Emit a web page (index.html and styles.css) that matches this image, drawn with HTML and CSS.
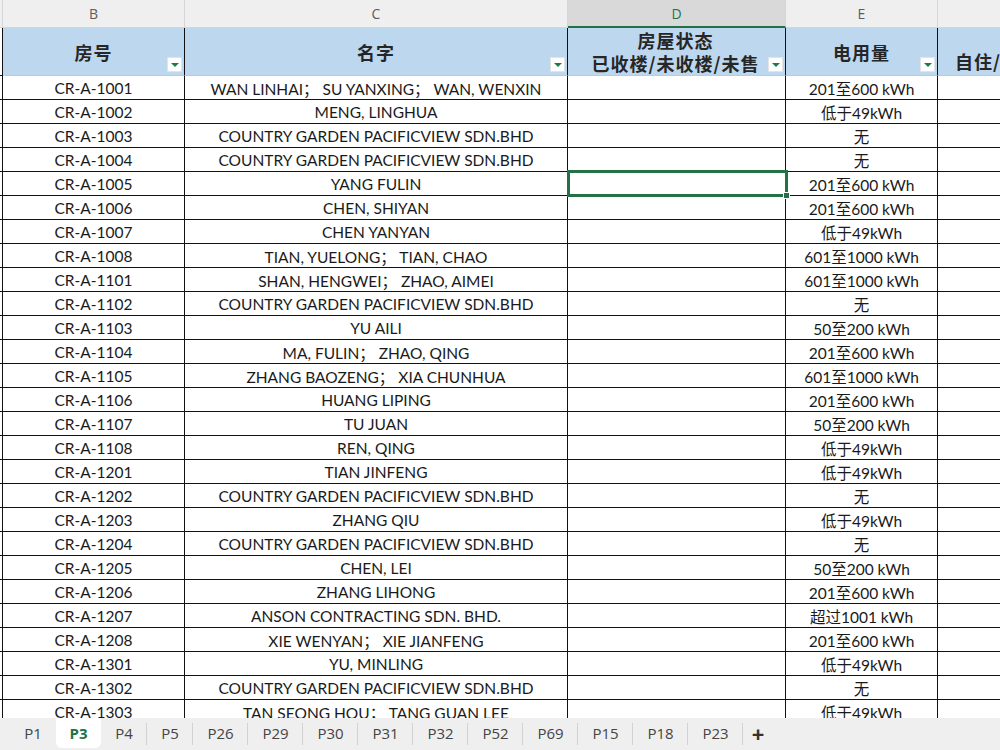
FILE: index.html
```html
<!DOCTYPE html>
<html lang="zh">
<head>
<meta charset="utf-8">
<title>P3</title>
<link rel="stylesheet" href="styles.css">
</head>
<body>
<div class="app">
  <div class="sheet">
    <div class="colhead">
      <div class="ch ch-a"></div>
      <div class="ch">B</div>
      <div class="ch">C</div>
      <div class="ch ch-sel">D</div>
      <div class="ch">E</div>
      <div class="ch"></div>
    </div>
    <div class="hdr">
      <div class="hc hc-a"></div>
      <div class="hc">房号<span class="filter"></span></div>
      <div class="hc">名字<span class="filter"></span></div>
      <div class="hc hc-two"><span class="ln">房屋状态</span><span class="ln">已收楼/未收楼/未售</span><span class="filter"></span></div>
      <div class="hc">电用量<span class="filter"></span></div>
      <div class="hc hc-f">自住/出租/空置</div>
    </div>
    <div class="row"><div class="c a"></div><div class="c">CR-A-1001</div><div class="c">WAN LINHAI； SU YANXING； WAN, WENXIN</div><div class="c"></div><div class="c">201至600 kWh</div><div class="c"></div></div>
    <div class="row"><div class="c a"></div><div class="c">CR-A-1002</div><div class="c">MENG, LINGHUA</div><div class="c"></div><div class="c">低于49kWh</div><div class="c"></div></div>
    <div class="row"><div class="c a"></div><div class="c">CR-A-1003</div><div class="c">COUNTRY GARDEN PACIFICVIEW SDN.BHD</div><div class="c"></div><div class="c">无</div><div class="c"></div></div>
    <div class="row"><div class="c a"></div><div class="c">CR-A-1004</div><div class="c">COUNTRY GARDEN PACIFICVIEW SDN.BHD</div><div class="c"></div><div class="c">无</div><div class="c"></div></div>
    <div class="row"><div class="c a"></div><div class="c">CR-A-1005</div><div class="c">YANG FULIN</div><div class="c c-sel"><span class="sel"><span class="handle"></span></span></div><div class="c">201至600 kWh</div><div class="c"></div></div>
    <div class="row"><div class="c a"></div><div class="c">CR-A-1006</div><div class="c">CHEN, SHIYAN</div><div class="c"></div><div class="c">201至600 kWh</div><div class="c"></div></div>
    <div class="row"><div class="c a"></div><div class="c">CR-A-1007</div><div class="c">CHEN YANYAN</div><div class="c"></div><div class="c">低于49kWh</div><div class="c"></div></div>
    <div class="row"><div class="c a"></div><div class="c">CR-A-1008</div><div class="c">TIAN, YUELONG； TIAN, CHAO</div><div class="c"></div><div class="c">601至1000 kWh</div><div class="c"></div></div>
    <div class="row"><div class="c a"></div><div class="c">CR-A-1101</div><div class="c">SHAN, HENGWEI； ZHAO, AIMEI</div><div class="c"></div><div class="c">601至1000 kWh</div><div class="c"></div></div>
    <div class="row"><div class="c a"></div><div class="c">CR-A-1102</div><div class="c">COUNTRY GARDEN PACIFICVIEW SDN.BHD</div><div class="c"></div><div class="c">无</div><div class="c"></div></div>
    <div class="row"><div class="c a"></div><div class="c">CR-A-1103</div><div class="c">YU AILI</div><div class="c"></div><div class="c">50至200 kWh</div><div class="c"></div></div>
    <div class="row"><div class="c a"></div><div class="c">CR-A-1104</div><div class="c">MA, FULIN； ZHAO, QING</div><div class="c"></div><div class="c">201至600 kWh</div><div class="c"></div></div>
    <div class="row"><div class="c a"></div><div class="c">CR-A-1105</div><div class="c">ZHANG BAOZENG； XIA CHUNHUA</div><div class="c"></div><div class="c">601至1000 kWh</div><div class="c"></div></div>
    <div class="row"><div class="c a"></div><div class="c">CR-A-1106</div><div class="c">HUANG LIPING</div><div class="c"></div><div class="c">201至600 kWh</div><div class="c"></div></div>
    <div class="row"><div class="c a"></div><div class="c">CR-A-1107</div><div class="c">TU JUAN</div><div class="c"></div><div class="c">50至200 kWh</div><div class="c"></div></div>
    <div class="row"><div class="c a"></div><div class="c">CR-A-1108</div><div class="c">REN, QING</div><div class="c"></div><div class="c">低于49kWh</div><div class="c"></div></div>
    <div class="row"><div class="c a"></div><div class="c">CR-A-1201</div><div class="c">TIAN JINFENG</div><div class="c"></div><div class="c">低于49kWh</div><div class="c"></div></div>
    <div class="row"><div class="c a"></div><div class="c">CR-A-1202</div><div class="c">COUNTRY GARDEN PACIFICVIEW SDN.BHD</div><div class="c"></div><div class="c">无</div><div class="c"></div></div>
    <div class="row"><div class="c a"></div><div class="c">CR-A-1203</div><div class="c">ZHANG QIU</div><div class="c"></div><div class="c">低于49kWh</div><div class="c"></div></div>
    <div class="row"><div class="c a"></div><div class="c">CR-A-1204</div><div class="c">COUNTRY GARDEN PACIFICVIEW SDN.BHD</div><div class="c"></div><div class="c">无</div><div class="c"></div></div>
    <div class="row"><div class="c a"></div><div class="c">CR-A-1205</div><div class="c">CHEN, LEI</div><div class="c"></div><div class="c">50至200 kWh</div><div class="c"></div></div>
    <div class="row"><div class="c a"></div><div class="c">CR-A-1206</div><div class="c">ZHANG LIHONG</div><div class="c"></div><div class="c">201至600 kWh</div><div class="c"></div></div>
    <div class="row"><div class="c a"></div><div class="c">CR-A-1207</div><div class="c">ANSON CONTRACTING SDN. BHD.</div><div class="c"></div><div class="c">超过1001 kWh</div><div class="c"></div></div>
    <div class="row"><div class="c a"></div><div class="c">CR-A-1208</div><div class="c">XIE WENYAN； XIE JIANFENG</div><div class="c"></div><div class="c">201至600 kWh</div><div class="c"></div></div>
    <div class="row"><div class="c a"></div><div class="c">CR-A-1301</div><div class="c">YU, MINLING</div><div class="c"></div><div class="c">低于49kWh</div><div class="c"></div></div>
    <div class="row"><div class="c a"></div><div class="c">CR-A-1302</div><div class="c">COUNTRY GARDEN PACIFICVIEW SDN.BHD</div><div class="c"></div><div class="c">无</div><div class="c"></div></div>
    <div class="row"><div class="c a"></div><div class="c">CR-A-1303</div><div class="c">TAN SEONG HOU； TANG GUAN LEE</div><div class="c"></div><div class="c">低于49kWh</div><div class="c"></div></div>
  </div>
  <div class="tabs">
    <div class="tab">P1</div>
    <div class="tab tab-active">P3</div>
    <div class="tab">P4</div>
    <div class="tab">P5</div>
    <div class="tab tab-w">P26</div>
    <div class="tab tab-w">P29</div>
    <div class="tab tab-w">P30</div>
    <div class="tab tab-w">P31</div>
    <div class="tab tab-w">P32</div>
    <div class="tab tab-w">P52</div>
    <div class="tab tab-w">P69</div>
    <div class="tab tab-w">P15</div>
    <div class="tab tab-w">P18</div>
    <div class="tab tab-w">P23</div>
    <div class="tab-add">+</div>
  </div>
</div>
</body>
</html>
```

FILE: styles.css
```css
* { box-sizing: border-box; }
html, body { margin: 0; padding: 0; background: #fff; }
body { font-family: "Lato", "Noto Sans CJK SC", sans-serif; color: #1a1a1a; }

.app {
  width: 1000px;
  height: 750px;
  display: flex;
  flex-direction: column;
  overflow: hidden;
}

.sheet {
  flex: 1;
  overflow: hidden;
  min-height: 0;
}

.colhead, .hdr, .row {
  display: grid;
  grid-template-columns: 3px 182px 383px 218px 152px 200px;
  width: 1000px;
}

/* column letters */
.colhead { height: 28px; background: #efefef; }
.ch {
  display: flex;
  align-items: center;
  justify-content: center;
  border-right: 1px solid #d6d6d6;
  border-bottom: 1px solid #d6d6d6;
  color: #5c5c5c;
  font-family: "Open Sans", "Liberation Sans", sans-serif;
  font-size: 14px;
}
.ch-sel {
  background: #d9d9d9;
  color: #217346;
  border-bottom: 2px solid #217346;
}

/* blue header row */
.hdr { height: 48px; }
.hc {
  position: relative;
  display: flex;
  align-items: center;
  justify-content: center;
  background: #bdd7ee;
  border-right: 1px solid #111;
  border-bottom: 1px solid #c4c9cf;
  font-family: "Noto Sans CJK SC", sans-serif;
  font-weight: 700;
  font-size: 18px;
  color: #262626;
  letter-spacing: 1px;
  white-space: nowrap;
}
.hc-a { background: #fff; border-bottom-color: #111; }
.hc-two {
  flex-direction: column;
  padding-right: 2px;
  padding-top: 1px;
}
.ln {
  display: block;
  height: 23px;
  line-height: 23px;
}
.hc-f {
  justify-content: flex-start;
  align-items: flex-end;
  padding-left: 17px;
  padding-bottom: 1px;
  border-right: none;
}
.filter {
  position: absolute;
  right: 2px;
  bottom: 3px;
  width: 15px;
  height: 15px;
  background: #fff;
  border: 1px solid #e3e3e3;
}
.filter::after {
  content: "";
  position: absolute;
  left: 3px;
  top: 5px;
  border-left: 4px solid transparent;
  border-right: 4px solid transparent;
  border-top: 4px solid #1e7a4c;
}

/* data rows */
.row { height: 24px; }
.c {
  position: relative;
  display: flex;
  align-items: center;
  justify-content: center;
  border-right: 1px solid #111;
  border-bottom: 1px solid #111;
  font-size: 15.5px;
  white-space: nowrap;
  color: #1a1a1a;
}
.c:last-child { border-right: none; }

.sel {
  position: absolute;
  left: -1px;
  top: -2px;
  width: 221px;
  height: 27px;
  border: 3px solid #217346;
  z-index: 2;
}
.handle {
  position: absolute;
  right: -5px;
  bottom: -5px;
  width: 7px;
  height: 7px;
  background: #217346;
  border: 1px solid #fff;
}

/* sheet tabs */
.tabs {
  height: 32px;
  flex: none;
  display: flex;
  align-items: flex-start;
  padding-left: 10px;
  background: #efefef;
  font-family: "Open Sans", "Liberation Sans", sans-serif;
  font-size: 15px;
  color: #444;
  position: relative;
  z-index: 3;
}
.tab {
  position: relative;
  width: 46px;
  height: 30px;
  display: flex;
  align-items: center;
  justify-content: center;
}
.tab::after {
  content: "";
  position: absolute;
  right: 0;
  top: 5px;
  height: 22px;
  border-right: 1px solid #d2d2d2;
}
.tab-w { width: 55px; }
.tab:first-child { width: 46px; }
.tab-active {
  width: 45px;
  background: #fff;
  color: #217346;
  font-weight: 700;
  border-radius: 0 0 6px 6px;
}
.tab-active::after, .tab:first-child::after { display: none; }
.tab-add {
  width: 30px;
  height: 30px;
  display: flex;
  align-items: center;
  justify-content: center;
  font-size: 22px;
  font-weight: 700;
  color: #333;
}
```
